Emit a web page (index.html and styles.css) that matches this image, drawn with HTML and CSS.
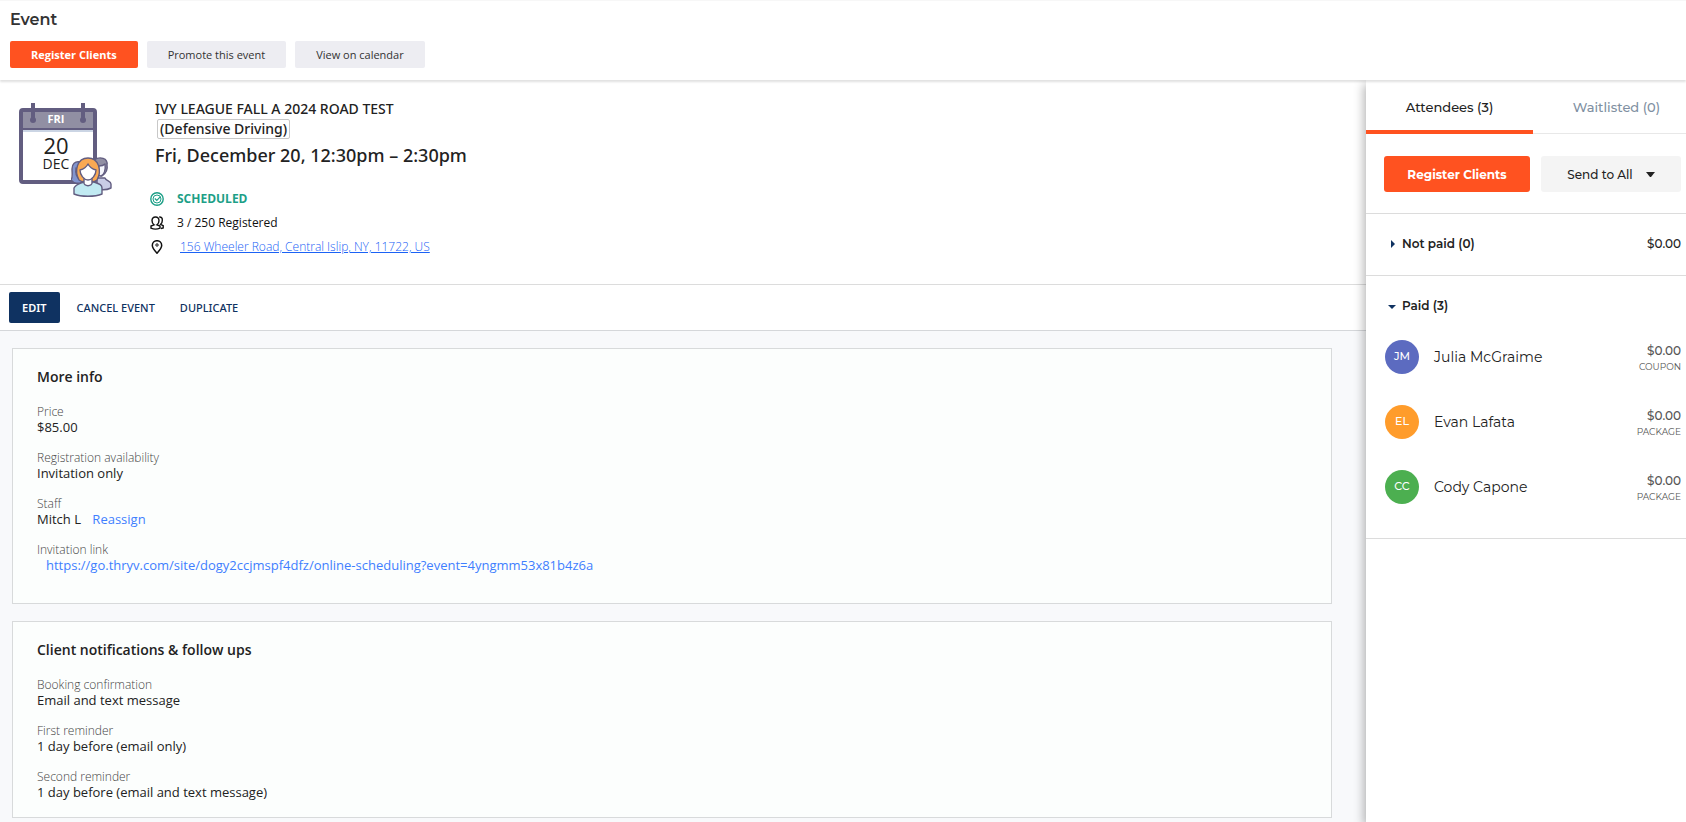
FILE: index.html
```html
<!DOCTYPE html>
<html lang="en">
<head>
  <meta charset="UTF-8">
  <meta name="viewport" content="width=device-width, initial-scale=1.0">
  <title>Event</title>
  <link rel="stylesheet" href="styles.css">
</head>
<body>
  <header class="topbar">
    <h1>Event</h1>
    <div class="topbar-buttons">
      <button class="btn btn-primary">Register Clients</button>
      <button class="btn">Promote this event</button>
      <button class="btn">View on calendar</button>
    </div>
  </header>

  <div class="layout">
    <main class="main">
      <section class="event-head">
        <div class="calendar">
          <svg width="96" height="96" viewBox="0 0 96 96" aria-hidden="true">
            <rect x="2" y="7" width="74" height="72" rx="2" fill="#fff" stroke="#625d80" stroke-width="4"/>
            <rect x="4" y="9" width="70" height="17" fill="#918fa3"/>
            <rect x="4" y="25" width="70" height="2" fill="#625d80"/>
            <rect x="4" y="27" width="70" height="2" fill="#cbd5e4"/>
            <circle cx="14" cy="17" r="3" fill="#625d80"/>
            <circle cx="64" cy="17" r="3" fill="#625d80"/>
            <path d="M14 0v17M64 0v17" stroke="#625d80" stroke-width="4"/>
          </svg>
          <span class="cal-weekday">FRI</span>
          <span class="cal-day">20</span>
          <span class="cal-month">DEC</span>
          <svg class="cal-people" width="42" height="42" viewBox="0 0 42 42" aria-hidden="true">
            <g stroke="#625d80" stroke-width="1.4" stroke-linejoin="round">
              <path d="M26 22h8c1 3 6 3 6 6v4c-4 2-10 2-14 1z" fill="#c9cce6"/>
              <path d="M23 4c6-4 14-2 13 5 1 5-2 9-5 11l-6-2z" fill="#918fa3"/>
              <path d="M28 10c3 0 5-1 6-2 1 6-1 11-4 12-2 0-3-2-3-4z" fill="#f5f6fc"/>
              <path d="M9 6C4 5 1 8 1 13c0 4 1 8-1 11 3 4 8 4 11 2z" fill="#8295cf"/>
              <path d="M5 12c-1 6 0 9 4 11z" fill="#f5f6fc"/>
              <path d="M3 38v-6c2-4 5-4 10-6h10c6 2 8 3 8 6v6c-7 3-21 3-28 0z" fill="#c1eaf2"/>
              <path d="M8 24c-5-9-2-22 9-22s14 13 9 22c-4 3-14 3-18 0z" fill="#f9a953"/>
              <path d="M13 21h8v5c1 5-9 5-8 0z" fill="#fff"/>
              <path d="M9 14c4-1 7-4 8-6 1 2 4 5 8 6 0 5-4 10-8 10s-8-5-8-10z" fill="#fff"/>
            </g>
          </svg>
        </div>
        <div class="event-info">
          <h2>IVY LEAGUE FALL A 2024 ROAD TEST</h2>
          <span class="event-type">(Defensive Driving)</span>
          <p class="event-time">Fri, December 20, 12:30pm – 2:30pm</p>
          <ul class="event-meta">
            <li class="scheduled">
              <svg width="14" height="14" viewBox="0 0 14 14" fill="none" stroke="currentColor" aria-hidden="true">
                <circle cx="7" cy="7" r="6.2" stroke-width="1.4"/>
                <circle cx="7" cy="7" r="4" stroke-width="1"/>
                <path d="M4.8 6.5l2 2 3.4-3.6" stroke-width="1.2"/>
              </svg>
              <span>SCHEDULED</span>
            </li>
            <li>
              <svg width="14" height="14" viewBox="0 0 14 14" fill="none" stroke="currentColor" stroke-width="1.4" aria-hidden="true">
                <path d="M5.500 1C3.200 1 2 2.200 2 4.600c0 1.800.8 3.400 2 4.200L1 10v2.200c2.500 1 6.500 1 9 0V10L7 8.800c1.200-.8 2-2.400 2-4.200C9 2.200 7.800 1 5.500 1z"/>
                <path d="M9.200 1c2.200-.2 3.300 1.200 3.100 3.400 0 1.700-.6 3-1.700 3.900l2.600 1.400v2.200l-2.200.6"/>
              </svg>
              <span>3 / 250 Registered</span>
            </li>
            <li>
              <svg width="14" height="14" viewBox="0 0 14 14" fill="none" stroke="currentColor" stroke-width="1.5" aria-hidden="true">
                <path d="M7 13.200C4 9.800 2.300 7.600 2.300 5.400a4.700 4.700 0 0 1 9.400 0c0 2.200-1.700 4.400-4.700 7.800z"/>
                <circle cx="7" cy="5" r="1.200" stroke-width="1"/>
              </svg>
              <a class="address" href="#">156 Wheeler Road, Central Islip, NY, 11722, US</a>
            </li>
          </ul>
        </div>
      </section>

      <nav class="actions">
        <button class="action action-edit">EDIT</button>
        <button class="action">CANCEL EVENT</button>
        <button class="action">DUPLICATE</button>
      </nav>

      <div class="cards">
        <section class="card card-info">
          <h3>More info</h3>
          <dl>
            <dt>Price</dt>
            <dd>$85.00</dd>
            <dt>Registration availability</dt>
            <dd>Invitation only</dd>
            <dt>Staff</dt>
            <dd>Mitch L <a class="reassign" href="#">Reassign</a></dd>
            <dt>Invitation link</dt>
            <dd><a class="invite" href="#">https://go.thryv.com/site/dogy2ccjmspf4dfz/online-scheduling?event=4yngmm53x81b4z6a</a></dd>
          </dl>
        </section>
        <section class="card">
          <h3>Client notifications &amp; follow ups</h3>
          <dl>
            <dt>Booking confirmation</dt>
            <dd>Email and text message</dd>
            <dt>First reminder</dt>
            <dd>1 day before (email only)</dd>
            <dt>Second reminder</dt>
            <dd>1 day before (email and text message)</dd>
          </dl>
        </section>
      </div>
    </main>

    <aside class="panel">
      <div class="tabs" role="tablist">
        <button class="tab active" role="tab" aria-selected="true">Attendees (3)</button>
        <button class="tab" role="tab" aria-selected="false">Waitlisted (0)</button>
      </div>
      <div class="panel-buttons">
        <button class="panel-btn panel-btn-primary">Register Clients</button>
        <button class="panel-btn">Send to All
          <svg width="9" height="5" viewBox="0 0 9 5" aria-hidden="true"><path d="M0 0h9L5 5H4z" fill="currentColor"/></svg>
        </button>
      </div>
      <section class="group">
        <button class="group-title" aria-expanded="false">
          <svg width="8" height="8" viewBox="0 0 8 8" aria-hidden="true"><path d="M3 0l4 4-4 4z" fill="#0f3261"/></svg>
          <span>Not paid (0)</span>
          <span class="total">$0.00</span>
        </button>
      </section>
      <section class="group group-paid">
        <button class="group-title" aria-expanded="true">
          <svg width="8" height="8" viewBox="0 0 8 8" aria-hidden="true"><path d="M0 3h8L4 7z" fill="#0f3261"/></svg>
          <span>Paid (3)</span>
        </button>
        <ul class="people">
          <li>
            <span class="avatar avatar-blue">JM</span>
            <span class="name">Julia McGraime</span>
            <span class="paid"><b>$0.00</b><small>COUPON</small></span>
          </li>
          <li>
            <span class="avatar avatar-orange">EL</span>
            <span class="name">Evan Lafata</span>
            <span class="paid"><b>$0.00</b><small>PACKAGE</small></span>
          </li>
          <li>
            <span class="avatar avatar-green">CC</span>
            <span class="name">Cody Capone</span>
            <span class="paid"><b>$0.00</b><small>PACKAGE</small></span>
          </li>
        </ul>
      </section>
    </aside>
  </div>
</body>
</html>
```
FILE: styles.css
```css
* {
  box-sizing: border-box;
}
body {
  margin: 0;
  min-height: 100vh;
  display: flex;
  flex-direction: column;
  font-family: 'Open Sans', sans-serif;
  font-size: 13px;
  color: #222;
  background: #fff;
}
h1, h2, h3, p, ul, dl, dd {
  margin: 0;
  padding: 0;
}
ul {
  list-style: none;
}
button {
  border: none;
  background: none;
  padding: 0;
  font-family: inherit;
  color: inherit;
  cursor: pointer;
}
a {
  color: #3f7fff;
  text-decoration: none;
}
svg {
  flex: none;
}

/* top bar */
.topbar {
  position: relative;
  z-index: 2;
  padding: 10px 10px 12px;
  border-top: 1px solid #f7f7f7;
  background: #fff;
  box-shadow: 0 2px 2px rgba(0,0,0,0.12);
}
.topbar h1 {
  font-family: Montserrat, Inter, sans-serif;
  font-size: 16px;
  line-height: 18px;
  font-weight: 600;
  color: #333;
}
.topbar-buttons {
  display: flex;
  gap: 9px;
  margin-top: 12px;
}
.btn {
  height: 27px;
  padding: 0 21px;
  border-radius: 2px;
  background: #ededf2;
  font-size: 11px;
  color: #333;
}
.btn-primary {
  background: #ff5220;
  color: #fff;
  font-weight: 700;
}

.layout {
  display: flex;
  flex: 1;
}
.main {
  flex: 1;
  display: flex;
  flex-direction: column;
}

/* event summary */
.event-head {
  display: flex;
  padding: 19px 19px 25px;
  gap: 35px;
}
.calendar {
  position: relative;
  width: 96px;
  height: 96px;
  margin-top: 4px;
}
.calendar span {
  position: absolute;
  left: 0;
  width: 74px;
  text-align: center;
}
.cal-weekday {
  top: 8px;
  font-size: 11px;
  line-height: 15px;
  font-weight: 700;
  color: #fff;
}
.cal-day {
  top: 31px;
  font-size: 22px;
  line-height: 22px;
}
.cal-month {
  top: 54px;
  font-size: 14px;
  line-height: 14px;
}
.cal-people {
  position: absolute;
  left: 52px;
  top: 53px;
}
.event-info h2,
.event-type,
.event-time {
  font-family: 'Noto Sans', 'Open Sans', sans-serif;
  font-weight: 500;
}
.event-info h2 {
  padding-left: 5px;
  font-size: 14px;
  line-height: 20px;
}
.event-type {
  display: inline-block;
  margin-left: 7px;
  padding: 0 2px;
  border: 1px solid #c8c8c8;
  border-radius: 2px;
  font-size: 14px;
  line-height: 18px;
}
.event-time {
  padding-left: 5px;
  font-size: 18px;
  line-height: 32px;
}
.event-meta {
  margin-top: 16px;
  font-size: 12px;
  line-height: 24px;
  color: #111;
}
.event-meta li {
  display: flex;
  align-items: center;
  gap: 13px;
}
.scheduled {
  color: #1d9f87;
  font-weight: 700;
}
.address {
  margin-left: 3px;
  font-weight: 300;
  color: #1b62f5;
  text-decoration: underline;
}

/* action row */
.actions {
  display: flex;
  align-items: center;
  padding: 7px 9px;
  border-top: 1px solid #dcdcdc;
  border-bottom: 1px solid #d5d7da;
}
.action {
  height: 31px;
  margin-right: 9px;
  padding: 0 8px;
  border-radius: 2px;
  font-family: 'Noto Sans', 'Open Sans', sans-serif;
  font-size: 11px;
  font-weight: 500;
  color: #0f3261;
}
.action-edit {
  padding: 0 13px;
  background: #0f3261;
  color: #fff;
  font-weight: 600;
}

/* detail cards */
.cards {
  flex: 1;
  display: flex;
  flex-direction: column;
  gap: 17px;
  padding: 17px 34px 4px 12px;
  background: #f8f9fb;
}
.card {
  padding: 18px 24px 17px;
  border: 1px solid #d8dadb;
  background: #fcfefd;
}
.card-info {
  padding-bottom: 30px;
}
.card h3 {
  font-size: 14px;
  line-height: 20px;
  font-weight: 600;
}
.card dl {
  margin-top: 17px;
}
.card dt {
  font-size: 12px;
  line-height: 15px;
  font-weight: 300;
  color: #444;
}
.card dd {
  margin-bottom: 15px;
  line-height: 16px;
}
.card dd:last-child {
  margin-bottom: 0;
}
.reassign {
  margin-left: 8px;
}
.invite {
  margin-left: 9px;
}

/* attendees panel */
.panel {
  position: relative;
  width: 320px;
  background: #fff;
  font-family: Montserrat, Inter, sans-serif;
  box-shadow: -2px 4px 10px rgba(0,0,0,0.3);
}
.tabs {
  display: flex;
  overflow: hidden;
}
.tab {
  flex: none;
  width: 167px;
  height: 54px;
  border-bottom: 1px solid #e8e8e8;
  font-size: 13px;
  font-weight: 500;
  color: #8090a2;
}
.tab.active {
  padding-top: 3px;
  border-bottom: 4px solid #ff5220;
  color: #222;
}
.panel-buttons {
  display: flex;
  gap: 11px;
  padding: 22px 5px 21px 18px;
}
.panel-btn {
  flex: 140 1 0;
  display: flex;
  align-items: center;
  justify-content: center;
  gap: 13px;
  height: 36px;
  border-radius: 3px;
  background: #f4f4f4;
  font-size: 12px;
  font-weight: 500;
}
.panel-btn-primary {
  flex-grow: 146;
  background: #ff5220;
  color: #fff;
  font-weight: 700;
}
.group {
  border-top: 1px solid #dcdcdc;
  padding: 19px 5px 21px 22px;
}
.group-title {
  display: flex;
  align-items: center;
  gap: 6px;
  width: 100%;
  height: 21px;
  font-size: 12px;
  font-weight: 600;
}
.total {
  margin-left: auto;
  font-weight: 500;
}
.group-paid {
  border-bottom: 1px solid #dcdcdc;
  padding-left: 19px;
  padding-bottom: 19px;
}
.group-paid .group-title {
  padding-left: 3px;
}
.people {
  margin-top: 8px;
}
.people li {
  display: flex;
  align-items: center;
  height: 65px;
}
.avatar {
  width: 34px;
  height: 34px;
  border-radius: 50%;
  line-height: 32px;
  text-align: center;
  font-size: 11px;
  font-weight: 500;
  color: #fff;
}
.avatar-blue {
  background: #5c6bc0;
}
.avatar-orange {
  background: #ff9c2b;
}
.avatar-green {
  background: #4caf50;
}
.name {
  margin-left: 15px;
  font-size: 14px;
}
.paid {
  margin-left: auto;
  padding-top: 4px;
  display: flex;
  flex-direction: column;
  align-items: flex-end;
  color: #555;
}
.paid b {
  font-size: 12px;
  line-height: 16px;
  font-weight: 500;
}
.paid small {
  font-size: 9px;
  line-height: 16px;
}
```
